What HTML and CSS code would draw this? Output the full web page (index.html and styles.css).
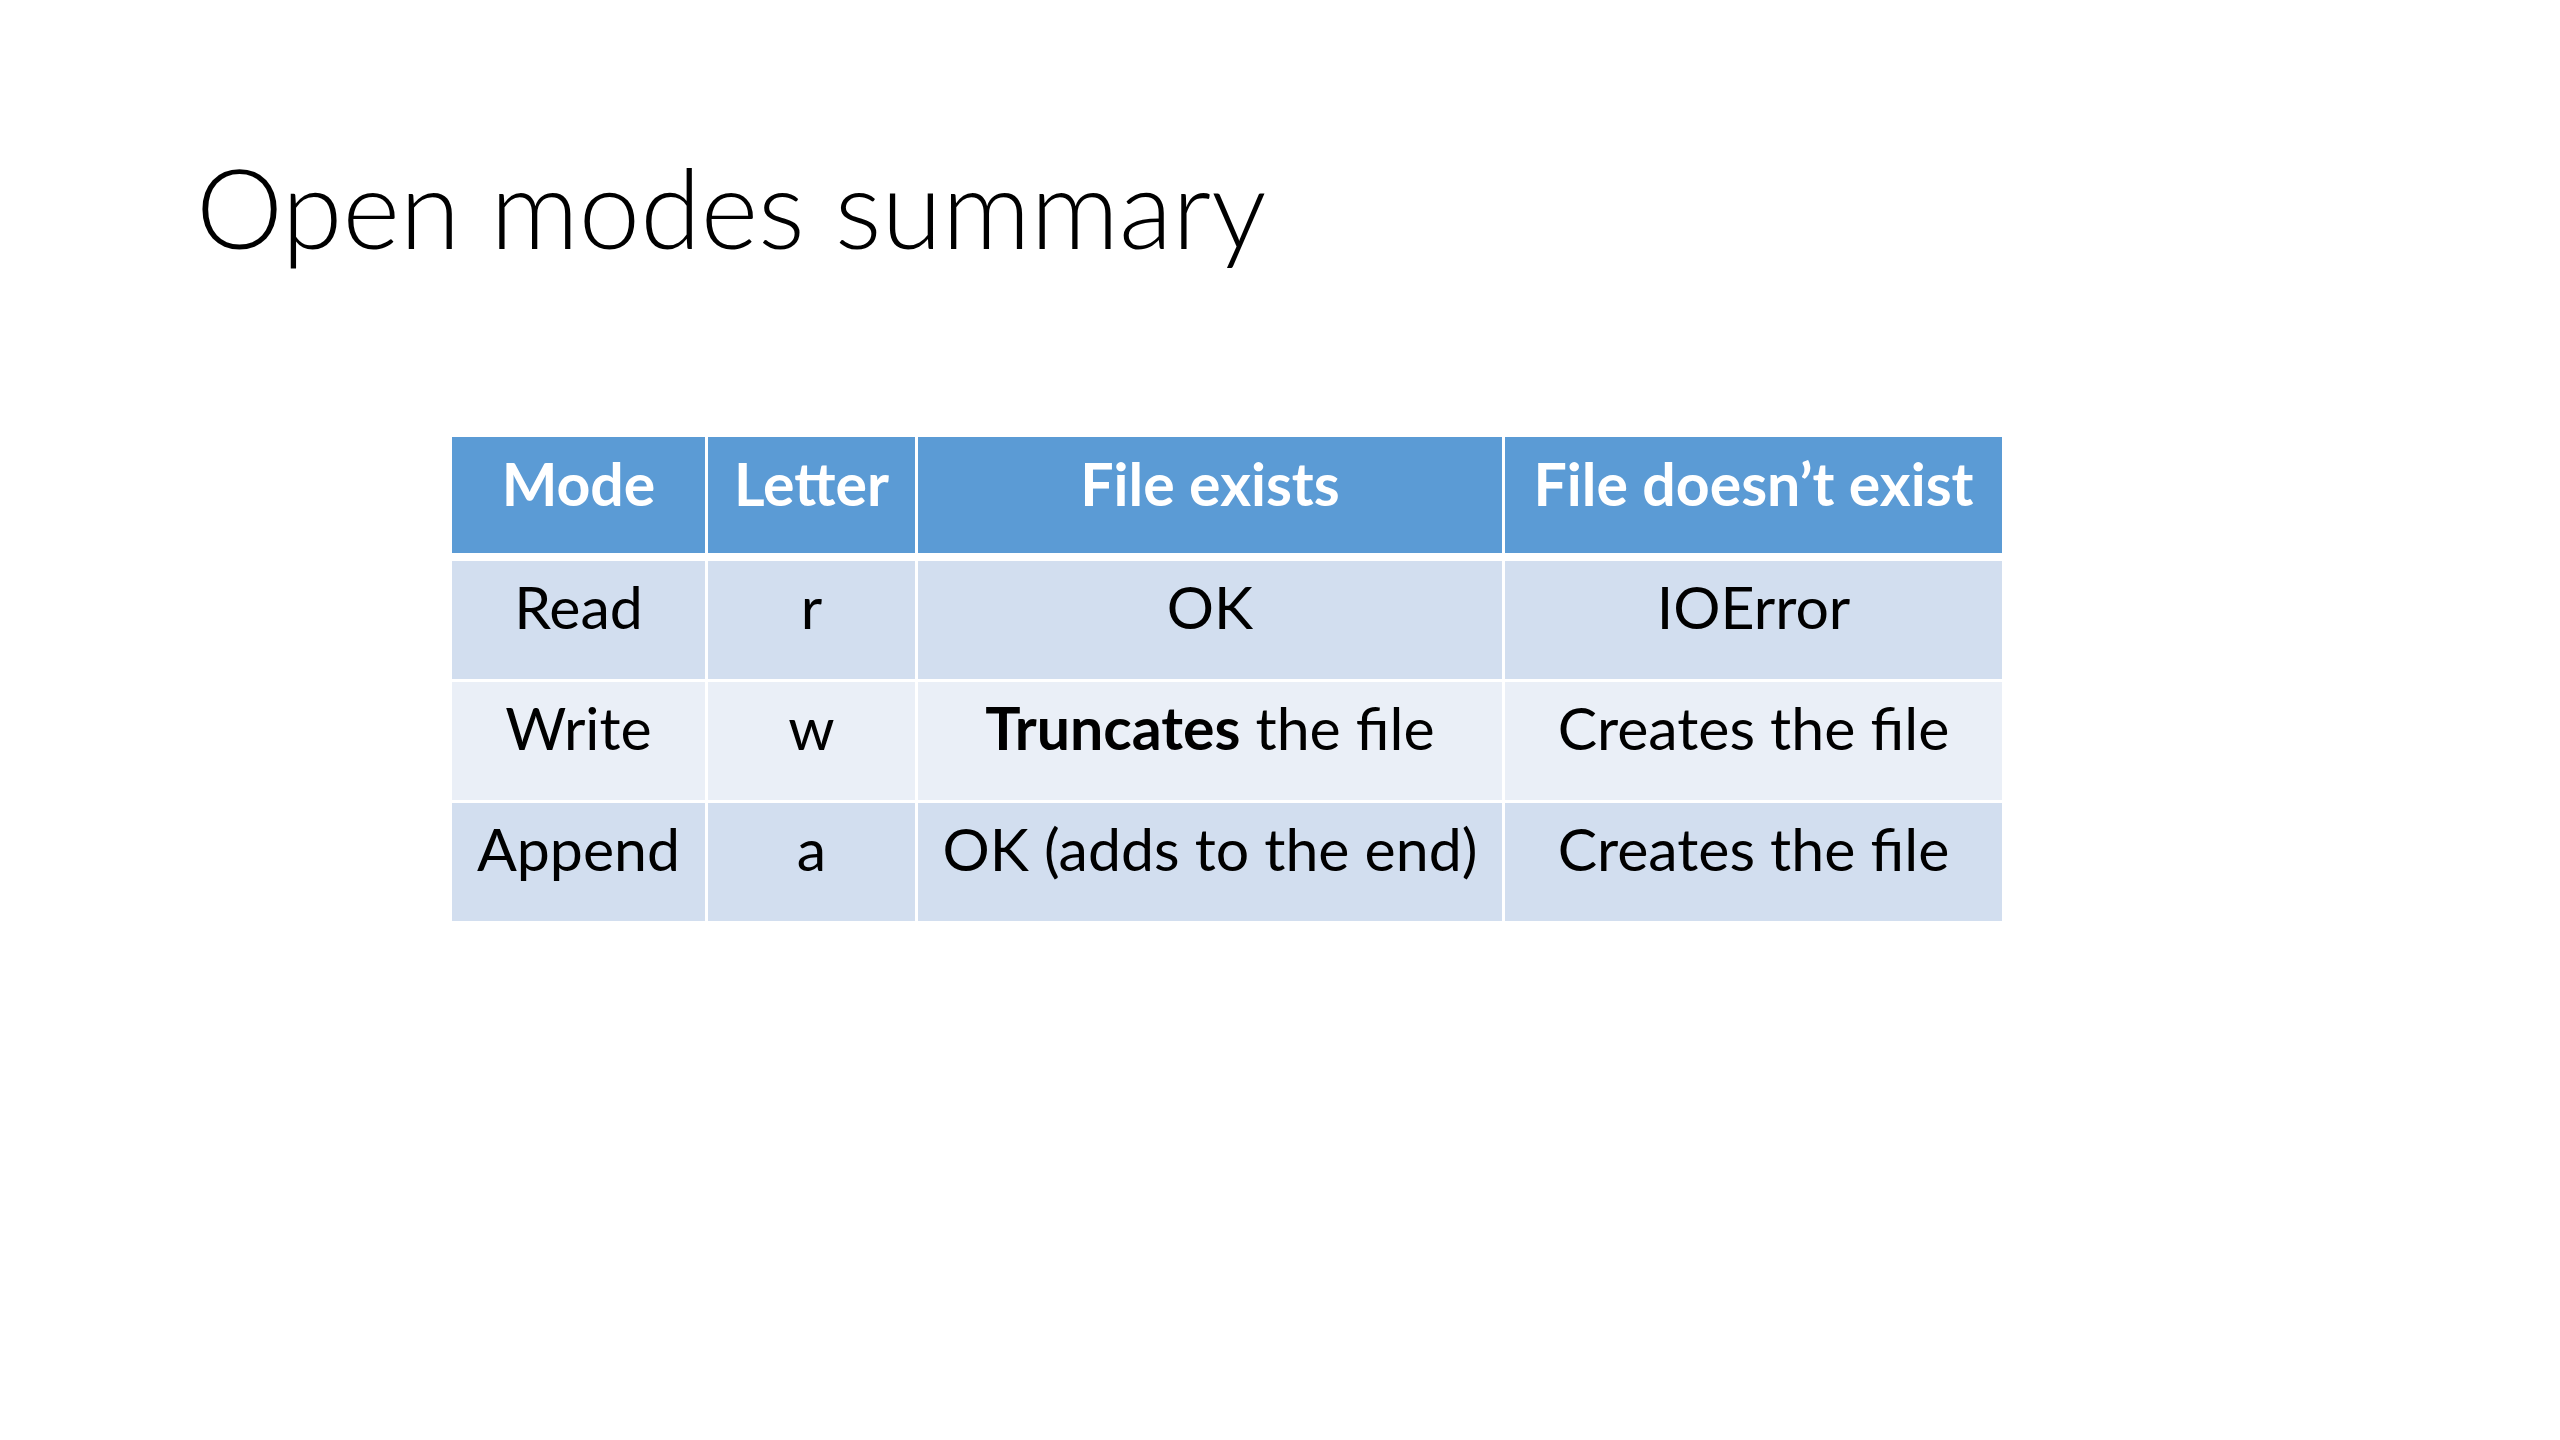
FILE: index.html
```html
<!DOCTYPE html>
<html lang="en">
<head>
<meta charset="utf-8">
<title>Open modes summary</title>
<link rel="stylesheet" href="styles.css">
</head>
<body>
<div class="slide">
  <h1 class="title">Open modes summary</h1>
  <table class="modes">
    <thead>
      <tr>
        <th class="c1">Mode</th>
        <th class="c2">Letter</th>
        <th class="c3">File exists</th>
        <th class="c4">File doesn’t exist</th>
      </tr>
    </thead>
    <tbody>
      <tr class="band1">
        <td>Read</td>
        <td>r</td>
        <td>OK</td>
        <td>IOError</td>
      </tr>
      <tr class="band2">
        <td>Write</td>
        <td>w</td>
        <td><strong>Truncates</strong> the file</td>
        <td>Creates the file</td>
      </tr>
      <tr class="band1">
        <td>Append</td>
        <td>a</td>
        <td>OK (adds to the end)</td>
        <td>Creates the file</td>
      </tr>
    </tbody>
  </table>
</div>
</body>
</html>
```
FILE: styles.css
```css
html, body {
  margin: 0;
  padding: 0;
  background: #ffffff;
}

.slide {
  width: 2560px;
  height: 1440px;
  background: #ffffff;
  font-family: Lato, "Liberation Sans", sans-serif;
  color: #000000;
  overflow: hidden;
}

.title {
  margin: 0;
  padding: 143px 0 0 196px;
  font-size: 110px;
  font-weight: 300;
  line-height: 127px;
  letter-spacing: 0;
  color: #000000;
}

.modes {
  margin: 164px 0 0 449px;
  border-collapse: separate;
  border-spacing: 3px;
  font-size: 59px;
}

.modes th,
.modes td {
  padding: 10px 0 0 0;
  vertical-align: top;
  text-align: center;
  line-height: 72px;
  box-sizing: border-box;
}

.modes th {
  height: 121px;
  padding-top: 11px;
  background: #5b9bd5;
  color: #ffffff;
  font-weight: 700;
  border-bottom: 5px solid #ffffff;
}

.modes td {
  height: 118px;
  font-weight: 400;
}

.modes td strong {
  font-weight: 700;
}

.modes .band1 td {
  background: #d2deef;
}

.modes .band2 td {
  background: #eaeff7;
}

.c1 { width: 253px; }
.c2 { width: 207px; }
.c3 { width: 584px; }
.c4 { width: 497px; }
```
